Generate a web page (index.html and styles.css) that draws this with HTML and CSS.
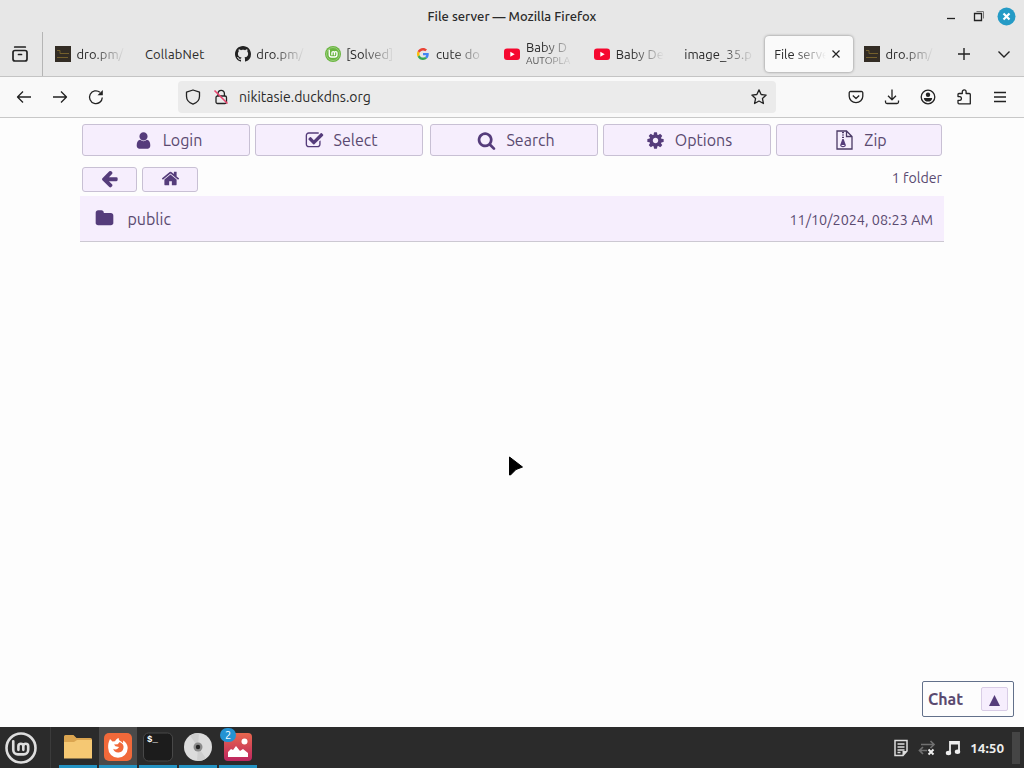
FILE: index.html
```html
<!doctype html>
<html lang="en">
<head>
  <meta charset="utf-8">
  <title>File server</title>
  <link rel="stylesheet" href="styles.css">
</head>
<body>

	<svg class="defs" width="0" height="0">
		<symbol id="fav-dro" viewBox="0 0 16 16">
			<path fill="#332c24" d="M0 0h16v16H0z"/>
			<path fill="none" stroke="#75602c" d="M2 4.500h3v3h9M2 11.500h11"/>
		</symbol>
		<symbol id="fav-yt" viewBox="0 0 16 16">
			<rect y="2.500" width="16" height="11.500" rx="3" fill="#f5082f"/>
			<path fill="#fff" d="M6.300 5.700v5l4.400-2.500z"/>
		</symbol>
		<symbol id="mint" viewBox="0 0 32 32">
			<path fill="none" stroke="currentColor" stroke-width="2.900" stroke-linecap="round" d="M8 8v9.500a5 5 0 0 0 5 5h6.500a5 5 0 0 0 5-5v-4a2.700 2.700 0 0 0-5.400 0v4m0-4a2.700 2.700 0 0 0-5.400 0v4"/>
		</symbol>
	</svg>

	<div class="titlebar">
		<div class="window-title">File server — Mozilla Firefox</div>
		<div class="window-buttons">
			<svg width="10" height="18" viewBox="0 0 10 18"><path d="M1 11.500h8" stroke="#222" stroke-width="1.300"/></svg>
			<svg width="12" height="12" viewBox="0 0 12 12" fill="none" stroke="#222"><path d="M1.500 3.500h7v7h-7z" stroke-width="1.300"/><path d="M3.500 1.500h7v7" stroke="#777"/></svg>
			<svg width="19" height="19" viewBox="0 0 19 19"><circle cx="9.500" cy="9.500" r="9" fill="#259bc6"/><path d="M6.500 6.500l6 6m0-6l-6 6" stroke="#fff" stroke-width="2.200"/></svg>
		</div>
	</div>

	<div class="tabbar">
		<div class="firefox-view">
			<svg width="18" height="18" viewBox="0 0 18 18" fill="none" stroke="#222" stroke-width="1.700" stroke-linecap="round"><rect x="2" y="5.500" width="14" height="10.500" rx="2"/><path d="M3.700 2h10.600M7.500 9.500h3"/></svg>
		</div>
		<div class="tabs">
			<div class="tab"><svg class="favicon"><use href="#fav-dro"/></svg><span class="label">dro.pm/</span></div>
			<div class="tab"><span class="label full">CollabNet</span></div>
			<div class="tab"><svg class="favicon" viewBox="0 0 16 16"><path fill="#222" d="M8 0C3.580 0 0 3.580 0 8c0 3.540 2.290 6.530 5.470 7.590.4.070.55-.17.55-.38 0-.19-.01-.82-.01-1.490-2.010.37-2.530-.49-2.690-.94-.09-.23-.48-.94-.82-1.130-.28-.15-.68-.52-.01-.53.63-.01 1.080.58 1.230.82.72 1.210 1.870.87 2.330.66.07-.52.28-.87.51-1.070-1.780-.2-3.640-.89-3.640-3.950 0-.87.31-1.590.82-2.150-.08-.2-.36-1.020.08-2.120 0 0 .67-.21 2.200.82.64-.18 1.320-.27 2-.27s1.360.09 2 .27c1.530-1.040 2.200-.82 2.200-.82.44 1.100.16 1.920.08 2.120.51.56.82 1.270.82 2.150 0 3.070-1.870 3.750-3.650 3.950.29.25.54.73.54 1.480 0 1.070-.01 1.930-.01 2.200 0 .21.15.46.55.38A8.010 8.010 0 0 0 16 8c0-4.420-3.580-8-8-8z"/></svg><span class="label">dro.pm/</span></div>
			<div class="tab"><svg class="favicon" viewBox="0 0 32 32" color="#fff"><circle cx="16" cy="16" r="16" fill="#69b53f"/><circle cx="16" cy="16" r="13" fill="none" stroke="#a5d38c" stroke-width="1.500"/><use href="#mint" x="1" y="1" width="30" height="30"/></svg><span class="label">[Solved]</span></div>
			<div class="tab"><svg class="favicon google" viewBox="0 0 48 48"><path fill="#ea4335" d="M24 9.500c3.540 0 6.710 1.220 9.210 3.600l6.850-6.850C35.900 2.380 30.470 0 24 0 14.620 0 6.510 5.380 2.560 13.220l7.980 6.190C12.430 13.720 17.740 9.500 24 9.500z"/><path fill="#4285f4" d="M46.980 24.550c0-1.570-.15-3.090-.38-4.550H24v9.020h12.940c-.58 2.960-2.260 5.480-4.780 7.180l7.730 6c4.510-4.180 7.090-10.360 7.090-17.650z"/><path fill="#fbbc05" d="M10.530 28.590c-.48-1.450-.76-2.990-.76-4.590s.27-3.140.76-4.590l-7.980-6.190C.92 16.460 0 20.120 0 24c0 3.880.92 7.540 2.560 10.780l7.970-6.190z"/><path fill="#34a853" d="M24 48c6.480 0 11.930-2.130 15.890-5.810l-7.730-6c-2.150 1.450-4.920 2.300-8.160 2.300-6.260 0-11.570-4.220-13.470-9.910l-7.980 6.190C6.510 42.620 14.620 48 24 48z"/></svg><span class="label">cute do</span></div>
			<div class="tab"><svg class="favicon"><use href="#fav-yt"/></svg><span class="label two-lines">Baby D<small>AUTOPLA</small></span></div>
			<div class="tab"><svg class="favicon"><use href="#fav-yt"/></svg><span class="label">Baby De</span></div>
			<div class="tab"><span class="label">image_35.p</span></div>
			<div class="tab active"><span class="label">File serve</span><svg width="10" height="10" viewBox="0 0 10 10"><path d="M1.500 1.500l7 7m0-7l-7 7" stroke="#222" stroke-width="1.200"/></svg></div>
			<div class="tab"><svg class="favicon"><use href="#fav-dro"/></svg><span class="label">dro.pm/</span></div>
		</div>
		<div class="tab-actions">
			<svg width="14" height="14" viewBox="0 0 14 14"><path d="M7 1v12M1 7h12" stroke="#222" stroke-width="1.400"/></svg>
			<svg width="14" height="14" viewBox="0 0 14 14"><path d="M1.500 4.500L7 10l5.500-5.500" fill="none" stroke="#222" stroke-width="1.400"/></svg>
		</div>
	</div>

	<div class="toolbar">
		<div class="nav">
			<svg viewBox="0 0 16 16"><path d="M15 8H1.500M7 2.500L1.500 8 7 13.500"/></svg>
			<svg viewBox="0 0 16 16"><path d="M1 8h13.500M9 2.500L14.500 8 9 13.500"/></svg>
			<svg viewBox="0 0 16 16"><path d="M14.300 8.500A6.400 6.400 0 1 1 12 3.300"/><path d="M14.800 1v5.300H9.500z" fill="#222" stroke="none"/></svg>
		</div>
		<div class="urlbar">
			<svg viewBox="0 0 16 16"><path d="M8 1l6.500 2.200v4C14.500 11 11.800 13.800 8 15.200 4.200 13.800 1.500 11 1.500 7.200v-4z"/></svg>
			<svg viewBox="0 0 16 16"><rect x="3" y="7" width="10.500" height="7.500" rx="1.500"/><path d="M5 7V4.500a3.200 3.200 0 0 1 6.400 0V7"/><path d="M1.500 1.500l13 13" stroke="#e8456f" stroke-width="1.600"/></svg>
			<span class="url">nikitasie.duckdns.org</span>
			<svg viewBox="0 0 16 16"><path d="M8 .9l2.150 4.600 5 .6-3.700 3.450.98 4.950L8 12.050 3.570 14.500l.98-4.950L.85 6.100l5-.6z"/></svg>
		</div>
		<div class="tools">
			<svg viewBox="0 0 16 16"><path d="M2.500 2.500h11a1.300 1.300 0 0 1 1.300 1.300V7.300a6.800 6.300 0 0 1-13.600 0V3.800a1.300 1.300 0 0 1 1.300-1.300zM4.800 6.500L8 9.500l3.200-3"/></svg>
			<svg viewBox="0 0 16 16"><path d="M8 .5v10M4 6.800l4 3.900 4-3.900M1.500 11.500V13A1.500 1.500 0 0 0 3 14.500h10a1.500 1.500 0 0 0 1.500-1.500v-1.500"/></svg>
			<svg viewBox="0 0 16 16"><circle cx="8" cy="8" r="6.800"/><circle cx="8" cy="5.700" r="2.200" fill="#222" stroke="none"/><path d="M3.800 8.900h8.400c0 2.400-2 3.600-4.200 3.600s-4.200-1.200-4.200-3.600z" fill="#222" stroke="none"/></svg>
			<svg viewBox="0 0 16 16"><path d="M6.300 4.500V2.800a1.900 1.900 0 0 1 3.800 0v1.700h3.200a1 1 0 0 1 1 1v9.300H3a1 1 0 0 1-1-1v-2.500h2a1.900 1.900 0 0 0 0-3.700H2V5.500a1 1 0 0 1 1-1z"/></svg>
			<svg viewBox="0 0 16 16"><path d="M2 3.500h12M2 8h12M2 12.500h12"/></svg>
		</div>
	</div>

	<div class="page">
		<div class="files">
			<div class="menu">
				<button class="btn"><svg viewBox="0 0 1792 1792"><path d="M1536 1399q0 109-62.500 187t-150.500 78h-854q-88 0-150.500-78t-62.500-187q0-85 8.500-160.500t31.500-152 58.500-131 94-89 134.500-34.500q131 128 313 128t313-128q76 0 134.500 34.500t94 89 58.500 131 31.500 152 8.500 160.500zm-256-887q0 159-112.500 271.500t-271.500 112.500-271.500-112.500-112.500-271.500 112.500-271.500 271.500-112.500 271.500 112.500 112.500 271.500z"/></svg>Login</button>
				<button class="btn"><svg viewBox="0 0 1792 1792"><path d="M1472 930v318q0 119-84.500 203.500t-203.500 84.500h-832q-119 0-203.500-84.500t-84.500-203.500v-832q0-119 84.500-203.500t203.500-84.500h832q63 0 117 25 15 7 18 23 3 17-9 29l-49 49q-10 10-23 10-3 0-9-2-23-6-45-6h-832q-66 0-113 47t-47 113v832q0 66 47 113t113 47h832q66 0 113-47t47-113v-254q0-13 9-22l64-64q10-10 23-10 6 0 12 3 20 8 20 29zm231-489l-814 814q-24 24-57 24t-57-24l-430-430q-24-24-24-57t24-57l110-110q24-24 57-24t57 24l263 263 647-647q24-24 57-24t57 24l110 110q24 24 24 57t-24 57z"/></svg>Select</button>
				<button class="btn search"><svg viewBox="0 0 1792 1792"><path d="M1216 832q0-185-131.500-316.500t-316.500-131.500-316.500 131.500-131.500 316.500 131.500 316.500 316.500 131.500 316.500-131.500 131.500-316.500zm512 832q0 52-38 90t-90 38q-54 0-90-38l-343-342q-179 124-399 124-143 0-273.500-55.500t-225-150-150-225-55.500-273.500 55.500-273.500 150-225 225-150 273.500-55.500 273.500 55.500 225 150 150 225 55.500 273.500q0 220-124 399l343 343q37 37 37 90z"/></svg>Search</button>
				<button class="btn"><svg viewBox="0 0 1792 1792"><path d="M1152 896q0-106-75-181t-181-75-181 75-75 181 75 181 181 75 181-75 75-181zm512-109v222q0 12-8 23t-20 13l-185 28q-19 54-39 91 35 50 107 138 10 12 10 25t-9 23q-27 37-99 108t-94 71q-12 0-26-9l-138-108q-44 23-91 38-16 136-29 186-7 28-36 28h-222q-14 0-24.500-8.500t-11.500-21.500l-28-184q-49-16-90-37l-141 107q-10 9-25 9-14 0-25-11-126-114-165-168-7-10-7-23 0-12 8-23 15-21 51-66.500t54-70.500q-27-50-41-99l-183-27q-13-2-21-12.500t-8-23.500v-222q0-12 8-23t19-13l186-28q14-46 39-92-40-57-107-138-10-12-10-24 0-10 9-23 26-36 98.500-107.500t94.500-71.500q13 0 26 10l138 107q44-23 91-38 16-136 29-186 7-28 36-28h222q14 0 24.500 8.500t11.500 21.500l28 184q49 16 90 37l142-107q9-9 24-9 13 0 25 10 129 119 165 170 7 8 7 22 0 12-8 23-15 21-51 66.500t-54 70.500q26 50 41 98l183 28q13 2 21 12.500t8 23.500z"/></svg>Options</button>
				<button class="btn zip"><svg viewBox="0 0 19 20"><path fill="none" stroke="#4b3a66" stroke-width="1.300" d="M2 1h9.500L17 6.500V19H2zM11.500 1v5.500H17"/><path fill="none" stroke="#4b3a66" stroke-width="2" stroke-dasharray="1.200 1.200" d="M8 2v9"/><path fill-rule="evenodd" d="M7 10h2l1.800 5c.2 1.400-1 2.200-2.800 2.200S5 16.400 5.200 15zM6.600 15h2.800v1H6.600z"/></svg>Zip</button>
			</div>
			<div class="breadcrumb">
				<button class="btn"><svg viewBox="0 0 1792 1792"><path d="M1664 896v128q0 53-32.500 90.500t-84.500 37.500h-704l293 294q38 36 38 90t-38 90l-75 76q-37 37-90 37-52 0-91-37l-651-652q-37-37-37-90 0-52 37-91l651-650q38-38 91-38 52 0 90 38l75 74q38 38 38 91t-38 91l-293 293h704q52 0 84.500 37.500t32.500 90.500z"/></svg></button>
				<button class="btn"><svg viewBox="0 0 1792 1792"><path d="M1472 992v480q0 26-19 45t-45 19h-384v-384h-256v384h-384q-26 0-45-19t-19-45v-480q0-1 .5-3t.5-3l575-474 575 474q1 2 1 6zm223-69l-62 74q-8 9-21 11h-3q-13 0-21-7l-692-577-692 577q-12 8-24 7-13-2-21-11l-62-74q-8-10-7-23.500t11-21.500l719-599q32-26 76-26t76 26l244 204v-195q0-14 9-23t23-9h192q14 0 23 9t9 23v408l219 182q10 8 11 21.500t-7 23.500z"/></svg></button>
				<span class="count">1 folder</span>
			</div>
			<div class="entry">
				<svg viewBox="0 0 1792 1792"><path d="M1728 608v704q0 92-66 158t-158 66h-1216q-92 0-158-66t-66-158v-960q0-92 66-158t158-66h320q92 0 158 66t66 158v32h672q92 0 158 66t66 158z"/></svg>
				<span class="name">public</span>
				<span class="date">11/10/2024, 08:23 AM</span>
			</div>
		</div>
		<div class="chat"><b>Chat</b><span class="up"><svg width="11" height="11" viewBox="0 0 11 11"><path d="M5.500 0L11 11H0z"/></svg></span></div>
		<svg class="cursor" width="17" height="21" viewBox="0 0 17 21"><path d="M2.500 1L15.500 11 9 13.500 3.500 19H2.500z" fill="#000" stroke="#000" stroke-width="1" stroke-linejoin="round"/></svg>
	</div>

	<div class="taskbar">
		<div class="start"><svg width="34" height="34" viewBox="0 0 34 34" color="#dedede"><circle cx="17" cy="17" r="14.500" fill="none" stroke="#dedede" stroke-width="2.600"/><use href="#mint" x="2" y="3" width="29" height="29"/></svg></div>
		<div class="apps">
			<div class="app"><svg viewBox="0 0 30 30"><path fill="#dba550" d="M1 4.500Q1 3 2.500 3h8l3 3H27.500Q29 6 29 7.500V12H1z"/><path fill="#f5c873" d="M1 10h10l3-2h15v18.500H1z"/></svg></div>
			<div class="app focused"><svg viewBox="0 0 30 30"><rect x="1" y="1" width="28" height="28" rx="5" fill="#f1693a"/><path fill="#fff" d="M7 7l2.500 2.500 2.500-.3c.7-1.500 2-2.600 3.700-3.200-.2 2 .8 2.800 2.800 3.700l1.500 1.500.2-2.700c2.800 2 4.500 4 4.500 7.500a9.700 9.700 0 0 1-19.500 0C5 12.500 5.500 10 7 7z"/><path fill="#f1693a" d="M11 12.500l3.700-.3 2-2.200c3 1.500 4.300 3.300 3.800 6a5.300 5.300 0 0 1-10.300.8c1.300 1 3.300 1 4.600-.3l1.300-1.500-3.600-.7z"/></svg></div>
			<div class="app"><svg viewBox="0 0 30 30"><rect x=".5" y="1" width="29" height="28" rx="5" fill="#1c1c1c" stroke="#484848"/></svg><span class="prompt">$_</span></div>
			<div class="app"><svg viewBox="0 0 30 30"><circle cx="15" cy="15" r="14" fill="#dcdcdc"/><path fill="#cecece" d="M15 15L7 3.500A14 14 0 0 1 16 1zM15 15l8 11.500A14 14 0 0 1 14 29z"/><circle cx="15" cy="15" r="4.500" fill="#8b8b8b"/><circle cx="15" cy="15" r="2.200" fill="#252525"/></svg></div>
			<div class="app"><svg viewBox="0 0 30 30"><defs><linearGradient id="pix" x2="0" y2="1"><stop stop-color="#e8674d"/><stop offset="1" stop-color="#bd2660"/></linearGradient></defs><rect x="1" y="1" width="28" height="28" rx="4" fill="url(#pix)"/><path fill="#fff" d="M5 25v-5l3-3 2 1 3-4 4 5 3-2 5 4v4z"/><circle cx="21.500" cy="9.500" r="3" fill="#fff"/></svg><span class="badge">2</span></div>
		</div>
		<div class="tray">
			<svg width="16" height="18" viewBox="0 0 16 18"><path d="M2 1.500h12v10.500l-4 4.500H2z" fill="none" stroke="#ddd" stroke-width="1.500"/><path d="M4.500 5h7M4.500 8h7M4.500 11h7M4.500 13.500h3" stroke="#ddd" stroke-width="1.300"/><path d="M9.500 16.500V12H14z" fill="#ddd"/></svg>
			<svg width="18" height="18" viewBox="0 0 18 18" fill="none" stroke="#707070" stroke-width="1.700"><path d="M3 5.500h13M12.500 2l3.500 3.500L12.500 9M9 11.500H1.500M5 8l-3.500 3.500L5 15"/><path d="M10.500 10.500l5 5m0-5l-5 5" stroke="#eee" stroke-width="2"/></svg>
			<svg width="16" height="16" viewBox="0 0 16 16"><path d="M5 13V2h9v9.500M5 3.500h9" fill="none" stroke="#eee" stroke-width="1.800"/><ellipse cx="3.500" cy="13" rx="2.700" ry="2.200" fill="#eee"/><ellipse cx="12.500" cy="11.700" rx="2.700" ry="2.200" fill="#eee"/></svg>
			<span class="clock">14:50</span>
			<span class="show-desktop"></span>
		</div>
	</div>

</body>
</html>
```
FILE: styles.css
```css
* {box-sizing: border-box;}
html, body {height: 100%}
body {
	margin: 0;
	display: flex;
	flex-direction: column;
	overflow: hidden;
	font-family: Ubuntu, "Noto Sans", sans-serif;
	font-size: 13px;
	color: #2a2a2a;
	background: #fdfdfd;
}
svg {display: block; flex: none;}
.defs {position: absolute;}

/* window frame */
.titlebar {
	height: 32px;
	flex: none;
	display: grid;
	grid-template-columns: 1fr auto 1fr;
	align-items: center;
	background: #e7e7e7;
}
.window-title {
	grid-column: 2;
	font-weight: 500;
	font-size: 13px;
}
.window-buttons {
	justify-self: end;
	display: flex;
	align-items: center;
	gap: 17px;
	padding-right: 8px;
}
.window-buttons svg:last-child {margin-left: -5px;}

.tabbar {
	height: 45px;
	flex: none;
	display: flex;
	background: #e7e7e7;
	border-bottom: 1px solid #c4c4c4;
}
.firefox-view {
	width: 43px;
	display: flex;
	align-items: center;
	padding-left: 11px;
	border-right: 1px solid #b5b5b5;
}
.tabs {
	display: flex;
	gap: 1.900px;
	padding: 3px 0 3px 3px;
}
.tab {
	width: 88px;
	display: flex;
	align-items: center;
	gap: 5.500px;
	padding: 0 9px;
	border-radius: 4px;
}
.tab.active {
	margin: 1px 0 1px;
	background: #fafafa;
	box-shadow: 0 0 3px rgba(0, 0, 0, .45);
	padding-right: 12px;
}
.favicon {width: 16px; height: 16px;}
.google {padding: 2px;}
.label {
	flex: 1;
	min-width: 0;
	padding: 3px 0;
	white-space: nowrap;
	-webkit-mask-image: linear-gradient(to left, transparent, #000 32px);
	mask-image: linear-gradient(to left, transparent, #000 32px);
}
.label.full {
	letter-spacing: .150px;
	-webkit-mask-image: none;
	mask-image: none;
}
.two-lines {line-height: 15px; padding: 0 0 2px;}
.two-lines small {display: block; font-size: 10px; line-height: 12px; color: #555;}
.tab-actions {
	flex: 1;
	display: flex;
	align-items: center;
	justify-content: flex-end;
	gap: 26px;
	padding-right: 13px;
}

.toolbar {
	height: 41px;
	flex: none;
	display: flex;
	align-items: center;
	background: #f9f9f9;
	border-bottom: 1px solid #c8c8c8;
}
.toolbar svg {
	width: 16px;
	height: 16px;
	fill: none;
	stroke: #222;
	stroke-width: 1.300;
	stroke-linejoin: round;
}
.nav {
	width: 178px;
	display: flex;
	gap: 20px;
	padding-left: 16px;
}
.urlbar {
	width: 598px;
	height: 32px;
	display: flex;
	align-items: center;
	gap: 12px;
	padding: 0 9px 0 7px;
	border-radius: 4px;
	background: #ebebeb;
}
.url {flex: 1; margin-left: -2px; font-size: 14px;}
.tools {
	flex: 1;
	display: flex;
	justify-content: flex-end;
	gap: 20px;
	padding-right: 16px;
}

/* file list */
.page {
	flex: 1;
	position: relative;
	color: #5a4a70;
}
.files {width: 864px; margin-left: 80px; padding-top: 6px;}
.menu {
	display: flex;
	gap: 5px;
	padding: 0 2px;
}
.btn {
	display: flex;
	align-items: center;
	justify-content: center;
	padding: 0;
	border: 1px solid #c8c0d4;
	border-radius: 3px;
	background: #f6eefd;
	color: #5a4a70;
	font: inherit;
}
.btn svg, .entry svg {width: 19px; height: 19px; fill: #553c7b;}
.menu .btn {
	width: 168px;
	height: 32px;
	gap: 10px;
	padding-left: 4px;
	font-size: 16px;
}
.menu .search {margin-left: 2px;}
.menu .zip {width: 166px;}
.menu .zip svg {height: 20px;}
.breadcrumb {
	display: flex;
	align-items: center;
	gap: 5px;
	margin-top: 11px;
	padding: 0 2px;
}
.breadcrumb .btn {width: 56px; height: 25px; padding-bottom: 2px;}
.breadcrumb .btn:first-child {width: 55px;}
.count {margin-left: auto; margin-bottom: 3px; font-size: 14.200px;}
.entry {
	height: 46px;
	display: flex;
	align-items: center;
	margin-top: 4px;
	padding: 0 11px 0 15px;
	background: #f6eefd;
	border-bottom: 1px solid #ccc8d2;
}
.name {margin-left: 13.500px; font-size: 16px;}
.date {margin-left: auto; padding-top: 2px; font-size: 14.400px;}

.chat {
	position: absolute;
	right: 10px;
	bottom: 10px;
	width: 92px;
	height: 36px;
	display: flex;
	align-items: center;
	justify-content: space-between;
	padding: 0 5px;
	border: 1px solid #62708a;
	border-radius: 2px;
	background: #fdfdfd;
	font-size: 16px;
}
.chat b {font-weight: 600;}
.up {
	width: 27px;
	height: 24px;
	display: flex;
	align-items: center;
	justify-content: center;
	border: 1px solid #d9cde6;
	border-radius: 2px;
	background: #f6eefd;
}
.up svg {fill: #553c7b; margin-top: 3px;}
.cursor {position: absolute; left: 507px; top: 338px;}

/* panel */
.taskbar {
	height: 41px;
	flex: none;
	display: flex;
	background: #2b2b2b;
}
.start {
	width: 51px;
	display: flex;
	align-items: center;
	padding-left: 4px;
	border-right: 1px solid #3b3b3b;
}
.apps {display: flex; gap: 2px; padding-left: 8px;}
.app {
	position: relative;
	width: 38px;
	display: flex;
	justify-content: center;
	padding-top: 5px;
	border-bottom: 3px solid #2493c3;
}
.app.focused {background: #4a4a4a;}
.app svg {width: 30px; height: 30px;}
.prompt {
	position: absolute;
	left: 8px;
	top: 8px;
	font: bold 9px "Liberation Mono", monospace;
	color: #fff;
}
.badge {
	position: absolute;
	left: 1px;
	top: 1px;
	width: 16px;
	height: 14px;
	border-radius: 7px;
	background: #2493d3;
	color: #fff;
	font-size: 11px;
	line-height: 14px;
	text-align: center;
}
.tray {
	margin-left: auto;
	display: flex;
	align-items: center;
	gap: 9px;
	padding-right: 4px;
	color: #eee;
}
.clock {font-weight: 600; font-size: 13.500px;}
.show-desktop {width: 8px; height: 32px; background: #454545; margin-left: -1px;}
```
